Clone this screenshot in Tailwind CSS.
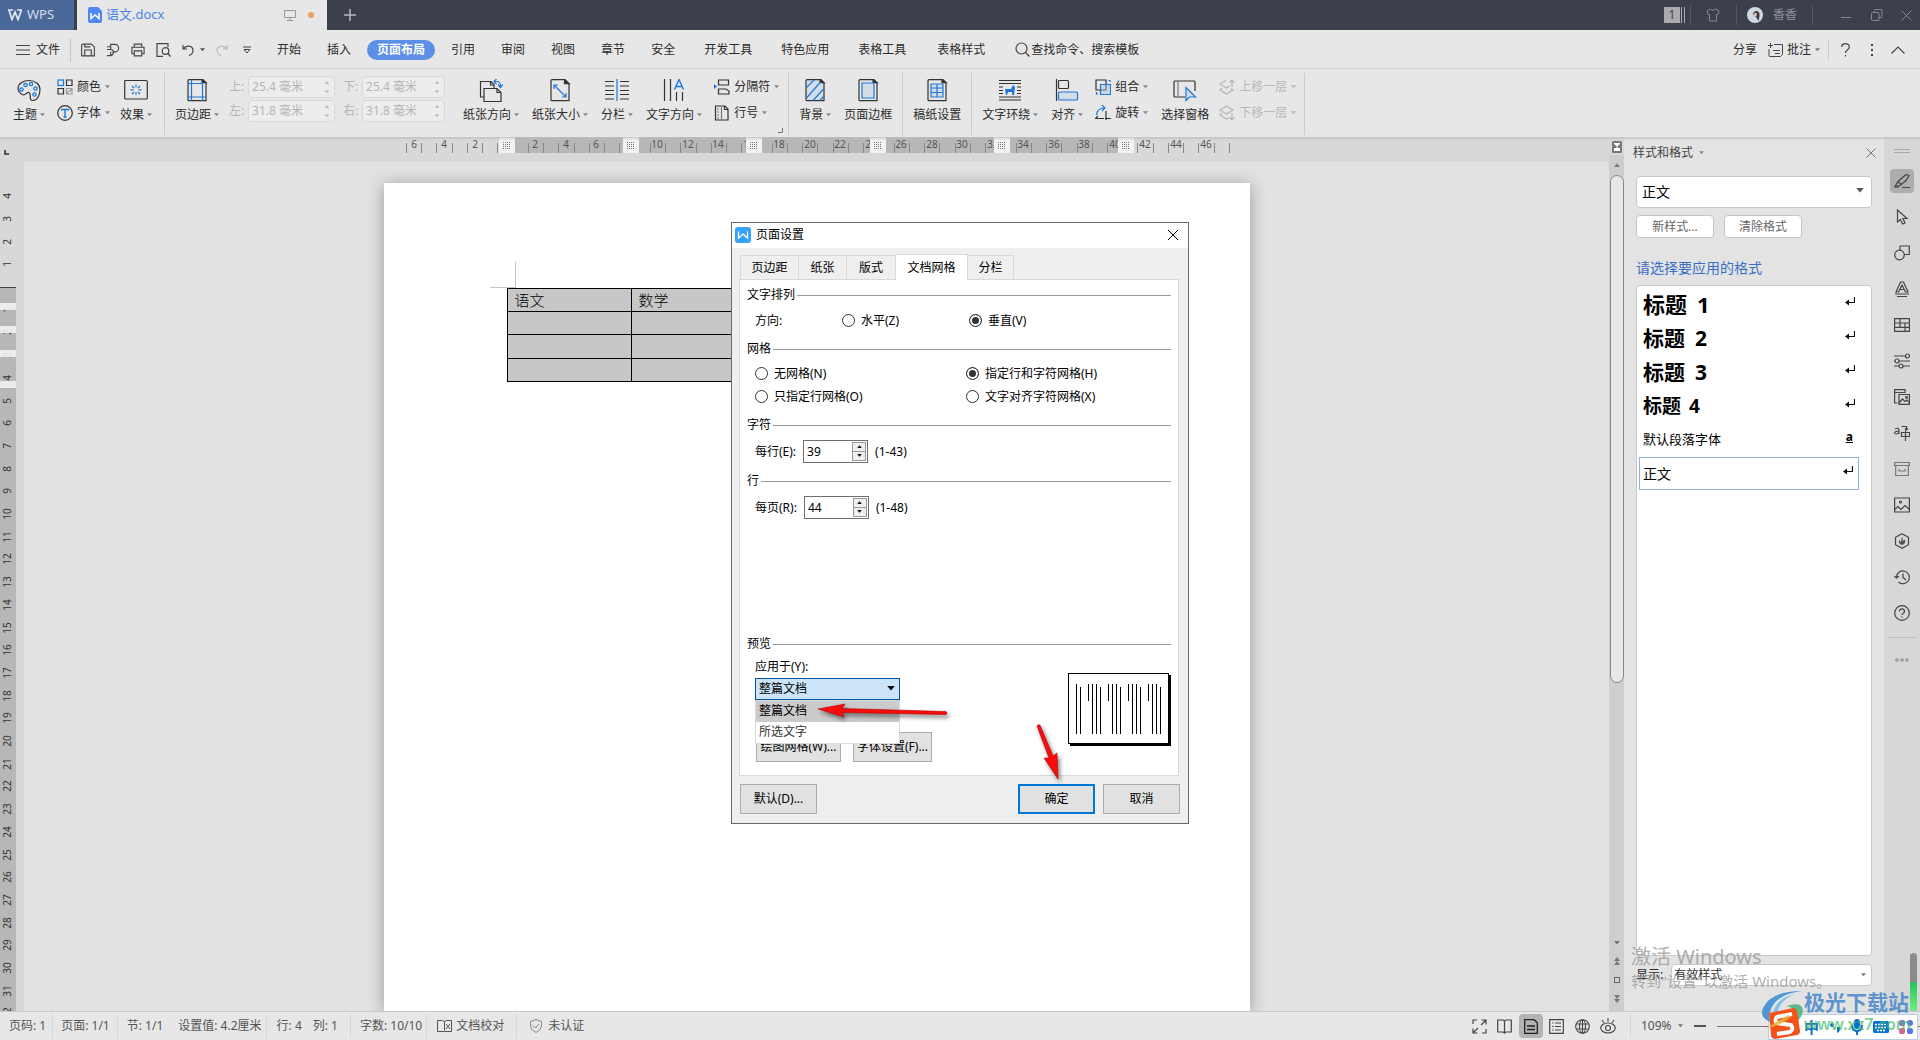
<!DOCTYPE html>
<html lang="zh-CN">
<head>
<meta charset="utf-8">
<title>语文.docx - WPS</title>
<script src="https://cdn.jsdelivr.net/npm/@tailwindcss/browser@4"></script>
</head>
<body class="relative flex h-screen flex-col overflow-hidden bg-[#e7e7e7] font-['Noto_Sans','Noto_Sans_CJK_SC',sans-serif] text-xs text-[#2b2b2b]">

<svg class="hidden">
  <symbol id="caret" viewBox="0 0 6 4"><path d="M0 0h6L3 3.6z" fill="currentColor"/></symbol>
  <symbol id="spin" viewBox="0 0 6 16"><path d="M0 3.500h6L3 0zM0 12.500h6L3 16z" fill="currentColor"/></symbol>
  <symbol id="ret" viewBox="0 0 10 9"><path d="M9.500 0v5.500H1" fill="none" stroke="#111" stroke-width="1.200"/><path d="M0 5.500l4-3v6z" fill="#111"/></symbol>
</svg>

<!-- Title bar -->
<header class="flex h-[30px] shrink-0 items-stretch bg-[#3c404c]">
  <button class="flex w-[74px] items-center gap-1 bg-[#4a6999] pl-[7px] text-[13px] text-[#d5dce8]">
    <svg class="h-3 w-4" viewBox="0 0 16 12" fill="none" stroke="#e4e9f1" stroke-width="1.700"><path d="M1 1h5M10 1h5M2 1l3 9.500L8 3l3 7.500L14.500 1"/></svg>
    WPS
  </button>
  <div class="ml-[3px] flex w-[250px] items-center bg-[#e7e7e7] px-[11px]">
    <svg class="h-4 w-[14px]" viewBox="0 0 14 16"><path d="M2 0h8l4 4v10a2 2 0 0 1-2 2H2a2 2 0 0 1-2-2V2a2 2 0 0 1 2-2z" fill="#4c88ef"/><path d="M3 6v5.500L7 8l4 3.500V6" fill="none" stroke="#fff" stroke-width="1.500"/></svg>
    <span class="ml-1 text-[13px] text-[#4c85e6]">语文.docx</span>
    <svg class="ml-auto h-3 w-3" viewBox="0 0 12 12" fill="none" stroke="#999"><path d="M.5 1.500h11v7H.5zM6 8.500v3M3 11.500h6"/></svg>
    <span class="mr-0.5 ml-3 h-1.5 w-1.5 rounded-full bg-[#e9a25c]"></span>
  </div>
  <button aria-label="新建" class="ml-[17px] flex w-3 items-center"><svg class="h-3 w-3" viewBox="0 0 12 12" stroke="#b5b8bf" stroke-width="1.500"><path d="M6 0v12M0 6h12"/></svg></button>
  <div class="ml-auto flex items-center">
    <span class="flex h-4 w-4 items-center justify-center bg-[#a9abb1] text-xs text-[#553d28]">1</span>
    <span class="ml-px h-4 w-1 border-x border-[#a9abb1]"></span>
    <span class="ml-[5px] h-5 w-px bg-[#555965]"></span>
    <svg class="ml-[15px] h-[14px] w-[14px]" viewBox="0 0 14 14" fill="none" stroke="#858892"><path d="M4.500 1L1 3l1 3.500h1.500V13h7V6.500H12L13 3 9.500 1Q7 4 4.500 1z"/></svg>
    <span class="ml-4 h-5 w-px bg-[#555965]"></span>
    <svg class="ml-2.5 h-4 w-4" viewBox="0 0 16 16"><circle cx="8" cy="8" r="8" fill="#cfdae0"/><path d="M6 7q1-3.500 4-3 3 1 2.500 5l-1 5-2.500-4z" fill="#3a3a46"/><path d="M6 9l2-3.500 2 1-.5 3z" fill="#e3bcae"/></svg>
    <span class="ml-2.5 text-[#8d9099]">香香</span>
    <span class="ml-[15px] h-5 w-px bg-[#555965]"></span>
    <button aria-label="最小化" class="ml-7"><svg class="h-3 w-2.5" viewBox="0 0 10 12" stroke="#858892"><path d="M0 8.500h10"/></svg></button>
    <button aria-label="还原" class="ml-5"><svg class="h-3 w-3" viewBox="0 0 12 12" fill="none" stroke="#858892"><rect x=".5" y="3.500" width="7.500" height="8" rx="1"/><path d="M3.500 3.500v-2a1 1 0 0 1 1-1h5.500a1 1 0 0 1 1 1v6a1 1 0 0 1-1 1H8"/></svg></button>
    <button aria-label="关闭" class="mr-2 ml-[18px]"><svg class="h-[11px] w-[11px]" viewBox="0 0 11 11" stroke="#858892"><path d="M.5.500l10 10M10.500.500l-10 10"/></svg></button>
  </div>
</header>

<!-- Menu bar -->
<nav class="flex h-[39px] shrink-0 items-center border-b border-[#d4d4d4] pt-px whitespace-nowrap">
  <button class="flex items-center gap-1.5 pl-4"><svg class="h-3 w-[14px]" viewBox="0 0 14 12" stroke="#444"><path d="M0 1.500h14M0 6h14M0 10.500h14"/></svg>文件</button>
  <span class="ml-2.5 h-6 w-px bg-[#c4c4c4]"></span>
  <div class="ml-2.5 flex w-[172px] items-center gap-[11px] text-[#555]">
    <svg class="h-[14px] w-[14px]" viewBox="0 0 15 14" fill="none" stroke="#444" stroke-width="1.200"><path d="M.7 13V2A1.300 1.300 0 0 1 2 .7h9l3.300 3v9.600H1zM4 .7v3h6M4 13V7h7v6"/></svg>
    <svg class="h-[14px] w-[14px]" viewBox="0 0 15 14" fill="none" stroke="#444" stroke-width="1.200"><path d="M5 13V9M5 6V1h4.500a4 4 0 0 1 0 8H7M1 3.500h4M1 6.500h4q3 0 3 3t-3 3.500H1"/></svg>
    <svg class="h-[14px] w-[14px]" viewBox="0 0 15 14" fill="none" stroke="#444" stroke-width="1.200"><path d="M3.500 4V.7h8V4M3.500 11H1V4h13v7h-2.500M3.500 8h8v5.300h-8z"/></svg>
    <svg class="h-[14px] w-[15px]" viewBox="0 0 15 14" fill="none" stroke="#444" stroke-width="1.200"><path d="M7 13.300H1V.7h11V4"/><circle cx="9.500" cy="8" r="3.300"/><path d="M12 10.500l2.500 3"/></svg>
    <span class="flex items-center gap-1.5"><svg class="h-3 w-3" viewBox="0 0 12 12" fill="none" stroke="#444" stroke-width="1.200"><path d="M1 1v4h4M1 5C5 0 11 2 11 6.500Q11 10 7 11.500"/></svg><svg class="h-1 w-[5px]"><use href="#caret"/></svg></span>
    <svg class="h-3 w-3" viewBox="0 0 12 12" fill="none" stroke="#bbb" stroke-width="1.200"><path d="M11 1v4H7M11 5C7 0 1 2 1 6.500Q1 10 5 11.500"/></svg>
    <svg class="ml-1 h-2 w-2" viewBox="0 0 8 8" fill="none" stroke="#444"><path d="M0 1h8M1 3.500h6L4 7z"/></svg>
  </div>
  <div class="ml-[11px] flex items-center">
    <button class="px-[13px]">开始</button><button class="px-[13px]">插入</button>
    <button class="mx-[3px] h-5 rounded-full bg-[#5b8fe8] px-2.5 font-bold text-white">页面布局</button>
    <button class="px-[13px]">引用</button><button class="px-[13px]">审阅</button><button class="px-[13px]">视图</button><button class="px-[13px]">章节</button><button class="px-[13px]">安全</button>
    <button class="pr-[13px] pl-4">开发工具</button><button class="pr-[13px] pl-4">特色应用</button><button class="pr-[13px] pl-4">表格工具</button><button class="pr-[13px] pl-[18px]">表格样式</button>
  </div>
  <button class="ml-[17px] flex items-center gap-px"><svg class="h-[15px] w-[15px]" viewBox="0 0 15 15" fill="none" stroke="#444" stroke-width="1.200"><circle cx="6.500" cy="6.500" r="5.500"/><path d="M10.500 10.500l4 4"/></svg>查找命令、搜索模板</button>
  <div class="ml-auto flex items-center pr-[15px]">
    <button>分享</button>
    <button class="ml-[11px] flex items-center gap-1"><svg class="h-[14px] w-[15px]" viewBox="0 0 15 14" fill="none" stroke="#444"><path d="M6 1.500h8.500v10l-2 2H2a1 1 0 0 1-1-1V6M0 2.500h5M2.500 0v5M5 7.500h7M7 10.500h5"/></svg>批注<svg class="h-1 w-[5px] text-[#777]"><use href="#caret"/></svg></button>
    <span class="ml-2 h-5 w-px bg-[#ccc]"></span>
    <button aria-label="帮助" class="ml-3"><svg class="h-[14px] w-[9px]" viewBox="0 0 9 14" fill="none" stroke="#444" stroke-width="1.200"><path d="M.7 4C.7-.5 8.300-.5 8.300 4c0 2.500-3.800 3-3.800 6M4.500 12v1.500"/></svg></button>
    <button aria-label="更多" class="ml-[21px]"><svg class="h-3 w-0.5" viewBox="0 0 2 12" fill="#444"><path d="M0 0h2v2H0zM0 5h2v2H0zM0 10h2v2H0z"/></svg></button>
    <button aria-label="收起功能区" class="ml-[18px]"><svg class="h-2 w-[14px]" viewBox="0 0 14 8" fill="none" stroke="#444" stroke-width="1.200"><path d="M.5 7.500L7 1l6.500 6.500"/></svg></button>
  </div>
</nav>

<!-- Ribbon -->
<section class="relative z-10 flex h-[68px] shrink-0 items-start pl-[13px] leading-4 whitespace-nowrap shadow-[0_1px_3px_#bbb]">
  <button class="flex flex-col items-center gap-1 pt-2.5">
    <svg class="h-6 w-6" viewBox="0 0 24 24" fill="none" stroke="#333" stroke-width="1.200"><path d="M12 1.500c6 0 11 3.500 11 9 0 6-3 11-7 11-5 0-1-6-4-8-2.500-1.500-3 4-7 2-3-2-4-4-4-6 0-4.500 5-8 11-8z"/><g stroke="#1f78d8" fill="#cfe0f2"><circle cx="4.500" cy="10.500" r="1.700"/><circle cx="8.500" cy="6" r="1.700"/><circle cx="14" cy="5" r="1.700"/><circle cx="18.500" cy="9.500" r="1.700"/><circle cx="17.500" cy="15.500" r="1.700"/></g></svg>
    <span class="flex items-center gap-[3px]">主题<svg class="h-1 w-[5px] text-[#888]"><use href="#caret"/></svg></span>
  </button>
  <div class="ml-3 flex flex-col gap-2.5 pt-2.5">
    <button class="flex items-center gap-1"><svg class="h-4 w-4" viewBox="0 0 16 16" fill="none" stroke="#333" stroke-width="1.200"><rect x="1" y="1" width="5.500" height="5.500" stroke="#1f78d8"/><path d="M9.500 1H15v5.500H9.500zM1 9.500h5.500V15H1z"/><path d="M9.500 9.500H15V15H9.500zM10 14l5-4" stroke="#999"/></svg>颜色<svg class="h-1 w-[5px] text-[#888]"><use href="#caret"/></svg></button>
    <button class="flex items-center gap-1"><svg class="h-4 w-4" viewBox="0 0 16 16" fill="none" stroke="#333" stroke-width="1.200"><circle cx="8" cy="8" r="7.300"/><path d="M4.500 5.500v-1h7v1M8 4.500v7.500M6.500 12h3" stroke="#1f78d8" stroke-width="1.400"/></svg>字体<svg class="h-1 w-[5px] text-[#888]"><use href="#caret"/></svg></button>
  </div>
  <button class="ml-2.5 flex flex-col items-center gap-1 pt-2.5">
    <svg class="h-6 w-6" viewBox="0 0 24 24" fill="none" stroke="#333" stroke-width="1.200"><rect x=".7" y="1.500" width="22.600" height="18.500" rx="1"/><path d="M12 5.500v3M12 13v3M6.500 10.800h3M14.500 10.800h3M8 7l2 2M14 13l2 2M16 7l-2 2M10 13l-2 2" stroke="#1f78d8"/></svg>
    <span class="flex items-center gap-[3px]">效果<svg class="h-1 w-[5px] text-[#888]"><use href="#caret"/></svg></span>
  </button>
  <span class="mt-1 ml-3 h-[62px] w-px bg-[#ccc]"></span>
  <button class="ml-2.5 flex flex-col items-center gap-1 pt-2.5">
    <svg class="h-6 w-6" viewBox="0 0 24 24" fill="none" stroke="#333" stroke-width="1.200"><path d="M4 .7h14l3 3v18H4a1 1 0 0 1-1-1v-19a1 1 0 0 1 1-1z"/><path d="M17 .7v3h4z" fill="#333"/><path d="M6.500 1v21M17.500 3.500V22M3 4.500h15M3 18h18" stroke="#1f78d8"/></svg>
    <span class="flex items-center gap-[3px]">页边距<svg class="h-1 w-[5px] text-[#888]"><use href="#caret"/></svg></span>
  </button>
  <div class="ml-2.5 grid grid-cols-[15px_87px_15px_87px] items-center gap-x-1 gap-y-0.5 pt-[7px] text-[#b5b5b5]">
    <label for="mt">上:</label><span class="flex h-[22px] items-center rounded-sm border border-[#d8d8d8] bg-[#ededed] pr-1 pl-[3px]"><input id="mt" disabled value="25.4 毫米" class="w-0 flex-1"><svg class="h-3 w-1.5"><use href="#spin"/></svg></span>
    <label for="mb" class="pl-1">下:</label><span class="ml-1 flex h-[22px] items-center rounded-sm border border-[#d8d8d8] bg-[#ededed] pr-1 pl-[3px]"><input id="mb" disabled value="25.4 毫米" class="w-0 flex-1"><svg class="h-3 w-1.5"><use href="#spin"/></svg></span>
    <label for="ml">左:</label><span class="flex h-[22px] items-center rounded-sm border border-[#d8d8d8] bg-[#ededed] pr-1 pl-[3px]"><input id="ml" disabled value="31.8 毫米" class="w-0 flex-1"><svg class="h-3 w-1.5"><use href="#spin"/></svg></span>
    <label for="mr" class="pl-1">右:</label><span class="ml-1 flex h-[22px] items-center rounded-sm border border-[#d8d8d8] bg-[#ededed] pr-1 pl-[3px]"><input id="mr" disabled value="31.8 毫米" class="w-0 flex-1"><svg class="h-3 w-1.5"><use href="#spin"/></svg></span>
  </div>
  <button class="ml-[18px] flex flex-col items-center gap-1 pt-2.5">
    <svg class="h-6 w-6" viewBox="0 0 24 24" fill="none" stroke="#333" stroke-width="1.200"><path d="M5 18H1.500V2.500H12l3 3V9M5 22.500V9.500h13l4 4v9z"/><path d="M11.500 2.500V6H15M18 9.500v4h4" /><path d="M15 2.500h3q3.500 0 3.500 5M17.500 0L15 2.500 17.500 5M19 5.500l2.500 3 2.500-3" stroke="#1f78d8"/></svg>
    <span class="flex items-center gap-[3px]">纸张方向<svg class="h-1 w-[5px] text-[#888]"><use href="#caret"/></svg></span>
  </button>
  <button class="ml-[13px] flex flex-col items-center gap-1 pt-2.5">
    <svg class="h-6 w-6" viewBox="0 0 24 24" fill="none" stroke="#333" stroke-width="1.200"><path d="M4 .7h13l4 4v17H4a1 1 0 0 1-1-1v-19a1 1 0 0 1 1-1z"/><path d="M16.500.7v4H21z" fill="#333"/><path d="M6 6l12 12M6 10V6h4M14 18h4v-4" stroke="#1f78d8"/></svg>
    <span class="flex items-center gap-[3px]">纸张大小<svg class="h-1 w-[5px] text-[#888]"><use href="#caret"/></svg></span>
  </button>
  <button class="ml-[13px] flex flex-col items-center gap-1 pt-2.5">
    <svg class="h-6 w-6" viewBox="0 0 24 24" fill="none" stroke="#333" stroke-width="1.200"><path d="M0 2.500h9M0 7h9M0 11.500h9M0 15.500h9M0 20h9M15 2.500h9M15 7h9M15 11.500h9M15 15.500h9M15 20h9"/><path d="M12 0v22" stroke="#1f78d8"/></svg>
    <span class="flex items-center gap-[3px]">分栏<svg class="h-1 w-[5px] text-[#888]"><use href="#caret"/></svg></span>
  </button>
  <button class="ml-[13px] flex flex-col items-center gap-1 pt-2.5">
    <svg class="h-6 w-6" viewBox="0 0 24 24" fill="none" stroke="#333" stroke-width="1.200"><path d="M2.500 0v22M8.500 0v22M14.500 13v9M20.500 13v9"/><path d="M12.500 10.500L17 .5l4.500 10M14 7.500h6" stroke="#1f78d8" stroke-width="1.400"/></svg>
    <span class="flex items-center gap-[3px]">文字方向<svg class="h-1 w-[5px] text-[#888]"><use href="#caret"/></svg></span>
  </button>
  <div class="relative ml-3 flex flex-col gap-2.5 pt-2.5 pr-[9px]">
    <button class="flex items-center gap-1"><svg class="h-4 w-4" viewBox="0 0 16 16" fill="none" stroke="#333" stroke-width="1.200"><path d="M4.500 1h10v5h-10zM4.500 15V10H12l3 2v3z"/><path d="M0 5l3 2.500L0 10z" fill="#1f78d8" stroke="none"/></svg>分隔符<svg class="h-1 w-[5px] text-[#888]"><use href="#caret"/></svg></button>
    <button class="flex items-center gap-1"><svg class="h-4 w-4" viewBox="0 0 16 16" fill="none" stroke="#333" stroke-width="1.200"><path d="M1.500 1H11l3 3v11H1.500zM10.500 1v3.500H14"/><path d="M7.500 2v12M3 4h2M3 7h2M3 10h2M3 13h2" stroke="#777"/></svg>行号<svg class="h-1 w-[5px] text-[#888]"><use href="#caret"/></svg></button>
    <svg class="absolute -bottom-3 right-[5px] h-[5px] w-[5px]" viewBox="0 0 5 5" fill="none" stroke="#777"><path d="M4.500 0v4.500H0"/></svg>
  </div>
  <span class="mt-1 h-[62px] w-px bg-[#ccc]"></span>
  <button class="ml-2.5 flex flex-col items-center gap-1 pt-2.5">
    <svg class="h-6 w-6" viewBox="0 0 24 24" fill="#d3dde8" stroke="#333" stroke-width="1.200"><path d="M4 .7h14l3 3v18H4a1 1 0 0 1-1-1v-19a1 1 0 0 1 1-1z"/><path d="M17 .7v3h4z" fill="#333"/><path d="M3.500 8.500L11 1M3.500 19L17.500 3M10 21.500L20.500 10M17 21.500l3.500-4" stroke="#1f78d8"/></svg>
    <span class="flex items-center gap-[3px]">背景<svg class="h-1 w-[5px] text-[#888]"><use href="#caret"/></svg></span>
  </button>
  <button class="ml-[13px] flex flex-col items-center gap-1 pt-2.5">
    <svg class="h-6 w-6" viewBox="0 0 24 24" fill="none" stroke="#333" stroke-width="1.200"><path d="M4 .7h14l3 3v18H4a1 1 0 0 1-1-1v-19a1 1 0 0 1 1-1z"/><path d="M17 .7v3h4z" fill="#333"/><path d="M6 4h12v15H6z" stroke="#1f78d8" fill="#d3dde8"/></svg>
    页面边框
  </button>
  <span class="mt-1 ml-2.5 h-[62px] w-px bg-[#ccc]"></span>
  <button class="ml-2.5 flex flex-col items-center gap-1 pt-2.5">
    <svg class="h-6 w-6" viewBox="0 0 24 24" fill="none" stroke="#333" stroke-width="1.200"><path d="M4 .7h14l3 3v18H4a1 1 0 0 1-1-1v-19a1 1 0 0 1 1-1z"/><path d="M17 .7v3h4z" fill="#333"/><path d="M6 5h12v13H6zM6 9h12M6 13.500h12M12 5v4M12 13.500V18M12 9v4.500" stroke="#1f78d8" fill="#d3dde8"/></svg>
    稿纸设置
  </button>
  <span class="mt-1 ml-2.5 h-[62px] w-px bg-[#ccc]"></span>
  <button class="ml-2.5 flex flex-col items-center gap-1 pt-2.5">
    <svg class="h-6 w-6" viewBox="0 0 24 24" fill="none" stroke="#333" stroke-width="1.200"><path d="M1 1.500h22M1 4.500h22M1 8h4M1 11.500h4M1 14.500h4M19 8h4M19 11.500h4M19 14.500h4M1 18h22M1 21h22"/><path d="M7 10h6l2-4 2 2-1 8h-2v-3h-4l-1 3H8z" fill="#1f78d8" stroke="none"/></svg>
    <span class="flex items-center gap-[3px]">文字环绕<svg class="h-1 w-[5px] text-[#888]"><use href="#caret"/></svg></span>
  </button>
  <button class="ml-[13px] flex flex-col items-center gap-1 pt-2.5">
    <svg class="h-6 w-6" viewBox="0 0 24 24" fill="none" stroke="#333" stroke-width="1.200"><path d="M1.500 0v22"/><rect x="3.500" y="1.500" width="10" height="8" rx="1"/><rect x="3.500" y="13" width="19" height="8" rx="1" stroke="#1f78d8" fill="#d3dde8"/></svg>
    <span class="flex items-center gap-[3px]">对齐<svg class="h-1 w-[5px] text-[#888]"><use href="#caret"/></svg></span>
  </button>
  <div class="ml-3 flex flex-col gap-2.5 pt-2.5">
    <button class="flex items-center gap-1"><svg class="h-4 w-4" viewBox="0 0 16 16" fill="none" stroke="#333" stroke-width="1.200"><path d="M1 1h10v10H1z"/><path d="M5.500 5.500h10v10h-10z" stroke="#1f78d8" fill="#9dc3ee66"/><path d="M13.500 1.500h1.500v1.500M1.500 13v2H3" stroke="#1f78d8"/></svg>组合<svg class="h-1 w-[5px] text-[#888]"><use href="#caret"/></svg></button>
    <button class="flex items-center gap-1"><svg class="h-4 w-4" viewBox="0 0 16 16" fill="none" stroke="#333" stroke-width="1.200"><path d="M0 13.500h9M3 11l-2.500 2.500M11 6v10M10 13.500h6" stroke-dasharray="9 1"/><path d="M1.500 10Q2 3 9.500 3M7 0l3 3-3 3" stroke="#1f78d8"/></svg>旋转<svg class="h-1 w-[5px] text-[#888]"><use href="#caret"/></svg></button>
  </div>
  <button class="ml-[13px] flex flex-col items-center gap-1 pt-2.5">
    <svg class="h-6 w-6" viewBox="0 0 24 24" fill="none" stroke="#333" stroke-width="1.200"><path d="M12 18H2a1 1 0 0 1-1-1V3a1 1 0 0 1 1-1h19a1 1 0 0 1 1 1v9"/><path d="M5 2v16" stroke="#777"/><path d="M13 8.500v13l3.500-3.500h6z" stroke="#1f78d8" fill="#d3dde8"/></svg>
    选择窗格
  </button>
  <div class="ml-2.5 flex flex-col gap-2.5 pt-2.5 text-[#b9b9b9]">
    <button disabled class="flex items-center gap-1"><svg class="h-4 w-4" viewBox="0 0 16 16" fill="none" stroke="#b5b5b5" stroke-width="1.200"><path d="M7 1.500L1 5l6.500 4 3-2M3 9l-2 2 6.500 4 6.500-4-2-1.500M13 8V1M10.500 3.500L13 1l2.500 2.500"/></svg>上移一层<svg class="h-1 w-[5px]"><use href="#caret"/></svg></button>
    <button disabled class="flex items-center gap-1"><svg class="h-4 w-4" viewBox="0 0 16 16" fill="none" stroke="#b5b5b5" stroke-width="1.200"><path d="M7.500 1L1 5l6.500 4L14 5zM3 8l-2 2 6.500 4 2-1M13 8v7M10.500 12.500L13 15l2.500-2.500"/></svg>下移一层<svg class="h-1 w-[5px]"><use href="#caret"/></svg></button>
  </div>
  <span class="mt-1 ml-2 h-[62px] w-px bg-[#ccc]"></span>
</section>

<!-- Workspace -->
<main class="flex min-h-0 flex-1">
  <div class="flex min-w-0 flex-1 flex-col">
    <div class="flex h-[25px] shrink-0 bg-[#d8d8d8]">
      <svg class="h-[25px] w-6" viewBox="0 0 24 25" fill="none" stroke="#555" stroke-width="2"><path d="M5 13v4h4"/></svg>
      <div class="flex flex-1 justify-center"><svg id="hruler" class="h-4 w-[866px] overflow-visible" viewBox="0 0 866 16"></svg></div>
    </div>
    <div class="flex min-h-0 flex-1">
      <div class="w-6 shrink-0 overflow-hidden bg-[#d8d8d8]"><svg id="vruler" class="h-full w-4"></svg></div>
      <div class="flex flex-1 justify-center overflow-hidden bg-[#e2e2e2] pt-[21px]">
        <article class="w-[866px] bg-white pt-[79px] shadow-[0_2px_16px_rgba(0,0,0,0.32)]">
          <div class="ml-[106px] h-[26px] w-[26px] border-r border-b border-[#c6c6c6]"></div>
          <table class="ml-[123px] w-[621px] table-fixed border-collapse bg-[#c7c7c7] font-['Noto_Sans_CJK_SC',sans-serif] text-[15px] leading-5 font-light text-black">
            <tbody>
              <tr class="h-[23px]"><td class="border border-black px-[7px]">语文</td><td class="border border-black px-[7px]">数学</td><td class="border border-black"></td><td class="border border-black"></td><td class="border border-black"></td></tr>
              <tr class="h-[23px]"><td class="border border-black"></td><td class="border border-black"></td><td class="border border-black"></td><td class="border border-black"></td><td class="border border-black"></td></tr>
              <tr class="h-6"><td class="border border-black"></td><td class="border border-black"></td><td class="border border-black"></td><td class="border border-black"></td><td class="border border-black"></td></tr>
              <tr class="h-[23px]"><td class="border border-black"></td><td class="border border-black"></td><td class="border border-black"></td><td class="border border-black"></td><td class="border border-black"></td></tr>
            </tbody>
          </table>
        </article>
      </div>
    </div>
  </div>

  <!-- Scroll bar -->
  <div class="flex w-[15px] shrink-0 flex-col items-center bg-[#cecece] text-[#777]">
    <div class="flex h-[18px] w-full justify-center bg-[#d8d8d8] pt-1"><svg class="h-3 w-2.5" viewBox="0 0 10 12"><rect width="10" height="12" rx="1.500" fill="#777"/><path d="M2 2h6v1L5.500 5v2H8v3H2V7h2.500V5L2 3z" fill="#fff"/></svg></div>
    <svg class="mt-2 h-1 w-1.5 rotate-180"><use href="#caret"/></svg>
    <div class="mt-2 h-[508px] w-[14px] rounded-full border border-[#888] bg-[#e8e8e8]"></div>
    <svg class="mt-auto h-1 w-1.5"><use href="#caret"/></svg>
    <svg class="mt-3 h-2 w-1.5" viewBox="0 0 6 8" fill="#777"><path d="M0 4h6L3 0zM0 8h6L3 4z"/></svg>
    <span class="mt-3 h-1.5 w-1.5 border border-[#666]"></span>
    <svg class="mt-3 mb-2 h-2 w-1.5" viewBox="0 0 6 8" fill="#777"><path d="M0 0h6L3 4zM0 4h6L3 8z"/></svg>
  </div>

  <!-- Styles pane -->
  <aside class="flex w-[260px] shrink-0 flex-col bg-[#e3e3e3] px-3">
    <div class="-ml-[3px] -mr-1 flex h-[30px] items-center gap-1.5 pt-px text-[#444]">样式和格式<svg class="h-1 w-[5px] text-[#888]"><use href="#caret"/></svg>
      <button aria-label="关闭窗格" class="ml-auto"><svg class="h-2.5 w-2.5" viewBox="0 0 10 10" stroke="#777"><path d="M.5.500l9 9M9.500.500l-9 9"/></svg></button></div>
    <div class="relative mt-[9px] h-8">
      <select aria-label="当前样式" class="h-8 w-full appearance-none rounded-sm border border-[#c9c9c9] bg-white px-[5px] text-sm text-black"><option>正文</option></select>
      <svg class="absolute top-3 right-2 h-[5px] w-2 text-[#555]"><use href="#caret"/></svg>
    </div>
    <div class="mt-[7px] flex gap-2.5 text-[#666]">
      <button class="h-[23px] w-[78px] rounded-sm border border-[#c4c4c4] bg-white">新样式...</button>
      <button class="h-[23px] w-[78px] rounded-sm border border-[#c4c4c4] bg-white">清除格式</button>
    </div>
    <p class="mt-5 text-sm leading-5 text-[#3b6fc5]">请选择要应用的格式</p>
    <ul class="mt-[7px] flex-1 rounded-sm border border-[#c9c9c9] bg-white px-0.5 pt-px text-black">
      <li class="flex h-[34px] items-center gap-2.5 px-1 text-[22px] leading-8 font-bold">标题 <span>1</span><svg class="mb-1.5 mr-2.5 ml-auto h-[9px] w-2.5"><use href="#ret"/></svg></li>
      <li class="flex h-[34px] items-center gap-2.5 px-1 text-[21px] leading-8 font-bold">标题 <span>2</span><svg class="mb-1.5 mr-2.5 ml-auto h-[9px] w-2.5"><use href="#ret"/></svg></li>
      <li class="flex h-[34px] items-center gap-2.5 px-1 text-[21px] leading-8 font-bold">标题 <span>3</span><svg class="mb-1.5 mr-2.5 ml-auto h-[9px] w-2.5"><use href="#ret"/></svg></li>
      <li class="flex h-[34px] items-center gap-2 px-1 text-[19px] leading-8 font-bold">标题 <span>4</span><svg class="mb-1.5 mr-2.5 ml-auto h-[9px] w-2.5"><use href="#ret"/></svg></li>
      <li class="flex h-[34px] items-center px-1 text-[13px]">默认段落字体<span class="mr-3 mb-1.5 ml-auto text-xs font-bold underline">a</span></li>
      <li class="mr-2.5 flex h-[33px] items-center border border-[#8fb0df] px-[3px] text-sm">正文<svg class="mb-1.5 mr-0.5 ml-auto h-[9px] w-2.5"><use href="#ret"/></svg></li>
    </ul>
    <div class="mt-2 mb-[25px] flex items-center gap-2">
      <label for="show">显示:</label>
      <div class="relative flex-1">
        <select id="show" class="block h-[22px] w-full appearance-none rounded-sm border border-[#c9c9c9] bg-white px-0.5"><option>有效样式</option></select>
        <svg class="absolute top-[9px] right-1.5 h-1 w-[5px] text-[#777]"><use href="#caret"/></svg>
      </div>
    </div>
  </aside>

  <!-- Side tool strip -->
  <div class="flex w-9 shrink-0 flex-col items-center gap-3 bg-[#d7d7d7] pt-3">
    <svg class="h-1 w-4" viewBox="0 0 16 4" stroke="#aaa"><path d="M0 .5h16M0 3.500h16"/></svg>
    <button aria-label="样式" class="mt-1 flex h-6 w-6 items-center justify-center rounded bg-[#adadad]"><svg class="h-4 w-4" viewBox="0 0 16 16" fill="none" stroke="#444" stroke-width="1.200"><path d="M1 13.500l3-5 8-7 3 1-3 5-6 5zM4 8.500l3 3M8 14.500h8M0 14h5"/></svg></button>
    <button aria-label="选择" class="flex h-6 w-6 items-center justify-center"><svg class="h-4 w-4" viewBox="0 0 16 16" fill="none" stroke="#444" stroke-width="1.200"><path d="M3.500 1v12l3-2.500 2 4.500 2.500-1-2-4.500h4z"/></svg></button>
    <button aria-label="形状" class="flex h-6 w-6 items-center justify-center"><svg class="h-4 w-4" viewBox="0 0 16 16" fill="none" stroke="#444" stroke-width="1.200"><circle cx="5.500" cy="10" r="4.800"/><path d="M6 5V2a1 1 0 0 1 1-1h8.300v8.500H10.500"/></svg></button>
    <button aria-label="艺术字" class="flex h-6 w-6 items-center justify-center"><svg class="h-4 w-4" viewBox="0 0 16 16" fill="none" stroke="#444" stroke-width="1.200"><path d="M2 11L6.500 1h3L14 11h-2.500L8 4 4.500 11zM6 8.500h4M1 13h14M3 15.500h10"/></svg></button>
    <button aria-label="表格" class="flex h-6 w-6 items-center justify-center"><svg class="h-4 w-4" viewBox="0 0 16 16" fill="none" stroke="#444" stroke-width="1.200"><path d="M.6 1.600h14.800v12.800H.6zM.6 6h14.800M.6 10.300h14.800M6 1.600v8.700M11 6v8.400"/></svg></button>
    <button aria-label="设置" class="flex h-6 w-6 items-center justify-center"><svg class="h-4 w-4" viewBox="0 0 16 16" fill="none" stroke="#444" stroke-width="1.200"><path d="M0 3h11M5 8h11M0 13h5M9 13h7M0 8h1"/><circle cx="13.500" cy="3" r="2"/><circle cx="3" cy="8" r="2"/><circle cx="7" cy="13" r="2"/></svg></button>
    <button aria-label="图库" class="flex h-6 w-6 items-center justify-center"><svg class="h-4 w-4" viewBox="0 0 16 16" fill="none" stroke="#444" stroke-width="1.200"><path d="M3.500 14H.6V.6H11V4M.6 3.500H11M5 5.500h10.400v9.900H5zM5 14l3.500-4 2.500 2.500 2-1.500 2.400 3"/><circle cx="12.500" cy="8.500" r=".8"/></svg></button>
    <button aria-label="翻译" class="flex h-6 w-6 items-center justify-center"><svg class="h-4 w-4" viewBox="0 0 16 16" fill="none" stroke="#444" stroke-width="1.200"><path d="M1 4q4-2 4 1.500V9M5 6Q.6 6 .6 8 1 10 5 8M7.500 1.500h5V5M11 3.500L12.500 5 14 3.500M7.500 7.500h8v4h-8zM11.500 5.500V16"/></svg></button>
    <button aria-label="归档" class="flex h-6 w-6 items-center justify-center"><svg class="h-4 w-4" viewBox="0 0 16 16" fill="none" stroke="#777" stroke-width="1.200"><path d="M.6 1.500h14.800v3H.6zM1.700 4.500h12.600v10H1.700zM5 8v2h6V8"/></svg></button>
    <button aria-label="图片" class="flex h-6 w-6 items-center justify-center"><svg class="h-4 w-4" viewBox="0 0 16 16" fill="none" stroke="#444" stroke-width="1.200"><path d="M.6 1h14.800v14H.6zM.6 12.500L4 9.500l3 3L11 8.500l4.400 4"/><circle cx="6.500" cy="5" r="1"/></svg></button>
    <button aria-label="稻壳" class="flex h-6 w-6 items-center justify-center"><svg class="h-4 w-4" viewBox="0 0 16 16" fill="none" stroke="#444" stroke-width="1.200"><path d="M8 .7l6.500 3.600v7.400L8 15.300l-6.500-3.600V4.300z"/><path d="M8 12Q4 11 5 7l2 2q-.5-3 1.500-5 .5 2 0 4l2.500-1.500Q12 11 8 12z" fill="#555" stroke="none"/></svg></button>
    <button aria-label="历史" class="flex h-6 w-6 items-center justify-center"><svg class="h-4 w-4" viewBox="0 0 16 16" fill="none" stroke="#444" stroke-width="1.200"><path d="M2.500 8a6.400 6.400 0 1 1 2 5M0 7l2.500 2L5 7M9 4.500v4l3 2.500"/></svg></button>
    <button aria-label="帮助" class="flex h-6 w-6 items-center justify-center"><svg class="h-4 w-4" viewBox="0 0 16 16" fill="none" stroke="#444" stroke-width="1.200"><circle cx="8" cy="8" r="7.300"/><path d="M5.500 6.500c0-3.500 5-3.500 5 0 0 1.500-2.500 1.500-2.500 3.500M8 11.500v1.300"/></svg></button>
    <span class="h-px w-[30px] bg-[#bfbfbf]"></span>
    <svg class="mt-2 h-1 w-[14px]" viewBox="0 0 14 4" fill="none" stroke="#888"><circle cx="2" cy="2" r="1.300"/><circle cx="7" cy="2" r="1.300"/><circle cx="12" cy="2" r="1.300"/></svg>
  </div>
</main>

<!-- Status bar -->
<footer class="flex h-[29px] shrink-0 items-center border-t border-[#c9c9c9] pl-[9px] whitespace-nowrap text-[#555]">
  <span>页码: 1</span><i class="mx-1.5 h-6 w-px bg-[#d6d6d6]"></i>
  <span class="ml-0.5">页面: 1/1</span><i class="mx-[7px] h-6 w-px bg-[#d6d6d6]"></i>
  <span class="ml-0.5">节: 1/1</span><span class="ml-[15px]">设置值: 4.2厘米</span><i class="ml-1 h-6 w-px bg-[#d6d6d6]"></i>
  <span class="ml-2.5">行: 4</span><span class="ml-[11px]">列: 1</span><i class="ml-3 h-6 w-px bg-[#d6d6d6]"></i>
  <span class="ml-[9px]">字数: 10/10</span><i class="ml-1 h-6 w-px bg-[#d6d6d6]"></i>
  <button class="ml-2.5 flex items-center gap-1"><svg class="h-3 w-[15px]" viewBox="0 0 15 12" fill="none" stroke="#555"><path d="M7.500 1.500v9M7.500 11.500H.5V.5h5l2 1 2-1h5v11h-7M9 4l4 5M13 4L9 9"/></svg>文档校对</button>
  <i class="ml-3 h-6 w-px bg-[#d6d6d6]"></i>
  <button class="ml-[13px] flex items-center gap-1.5"><svg class="h-[14px] w-3" viewBox="0 0 12 14" fill="none" stroke="#888"><path d="M6 .6l5.500 1.900V7q0 4-5.500 6.500Q.5 11 .5 7V2.500zM3 6.500l2.500 2.500L9 5"/></svg>未认证</button>
  <div class="ml-auto flex w-[448px] items-center">
    <svg class="h-[15px] w-[15px]" viewBox="0 0 15 15" fill="none" stroke="#444" stroke-width="1.200"><path d="M9.500 1H14v4.500M14 1L9 6M5.500 14H1V9.500M1 14l5-5M1 5V1h4M14 10v4h-4"/></svg>
    <svg class="ml-2.5 h-[15px] w-[15px]" viewBox="0 0 15 15" fill="none" stroke="#444" stroke-width="1.200"><path d="M7.500 14V2L6 1H.7v12H6zl1.500-1h5.300V1H9L7.500 2"/></svg>
    <span class="ml-[7px] flex h-6 w-6 items-center justify-center rounded bg-[#b3b3b3]"><svg class="h-[15px] w-[14px]" viewBox="0 0 14 15" fill="none" stroke="#222" stroke-width="1.300"><path d="M.7.700H10l3.300 3v10.600H.7zM3 7h8M3 10.500h8"/></svg></span>
    <svg class="ml-1.5 h-[15px] w-[15px]" viewBox="0 0 15 15" fill="none" stroke="#444" stroke-width="1.200"><path d="M.7.700h13.600v13.600H.7zM3 4h1.500M6 4h6M3 7.500h1.500M6 7.500h6M3 11h1.500M6 11h6"/></svg>
    <svg class="ml-[11px] h-[15px] w-[15px]" viewBox="0 0 15 15" fill="none" stroke="#444" stroke-width="1.100"><circle cx="7.500" cy="7.500" r="6.800"/><ellipse cx="7.500" cy="7.500" rx="3" ry="6.800"/><path d="M7.500.7v13.600M1.300 5h12.400M1.300 10h12.400"/></svg>
    <svg class="ml-2.5 h-4 w-4" viewBox="0 0 16 16" fill="none" stroke="#444" stroke-width="1.100"><ellipse cx="8" cy="10" rx="7.300" ry="5"/><circle cx="8" cy="10" r="2.500"/><path d="M8 0v3.500M2 2l2 3M14 2l-2 3"/></svg>
    <i class="ml-3.5 h-6 w-px bg-[#d6d6d6]"></i>
    <span class="ml-2.5 flex items-center gap-1.5">109%<svg class="h-1 w-[5px] text-[#777]"><use href="#caret"/></svg></span>
    <span class="ml-[11px] h-0.5 w-3 bg-[#555]"></span>
    <span class="ml-[11px] h-px flex-1 bg-[#777]"></span>
  </div>
</footer>

<!-- Page setup dialog -->
<form class="absolute top-[222px] left-1/2 z-20 flex h-[602px] w-[458px] -translate-x-1/2 flex-col border border-[#6b6b6b] bg-[#efefef] text-black" onsubmit="return false">
  <div class="flex h-[25px] shrink-0 items-center gap-[5px] bg-white pr-2.5 pb-px pl-[3px]">
    <svg class="h-4 w-4" viewBox="0 0 16 16"><rect width="16" height="16" rx="3" fill="#36a3fb"/><path d="M3.500 4.500V11L8 7l4.500 4V4.500" fill="none" stroke="#fff" stroke-width="1.300"/></svg>
    页面设置
    <button aria-label="关闭" class="ml-auto"><svg class="h-2.5 w-2.5" viewBox="0 0 10 10" stroke="#000"><path d="M0 0l10 10M10 0L0 10"/></svg></button>
  </div>
  <div class="mt-1.5 ml-2 flex h-[25px] shrink-0 items-end">
    <button class="h-6 w-[59px] border border-b-0 border-[#d9d9d9]">页边距</button>
    <button class="h-6 w-12 border-t border-r border-[#d9d9d9]">纸张</button>
    <button class="h-6 w-12 border-t border-[#d9d9d9]">版式</button>
    <button class="relative z-10 -mb-px h-[26px] w-[73px] border border-b-0 border-[#d9d9d9] bg-white">文档网格</button>
    <button class="h-6 w-[46px] border-t border-r border-[#d9d9d9]">分栏</button>
  </div>
  <div class="mr-[9px] ml-[7px] flex flex-1 flex-col border border-[#d9d9d9] bg-white px-[7px] pt-[5px] pb-3">
    <div class="flex h-5 items-center gap-0.5">文字排列<span class="h-px flex-1 bg-[#999]"></span></div>
    <div class="mt-1 grid h-[23px] grid-cols-[87px_127px_1fr] items-center pl-2">
      <span>方向:</span>
      <label class="flex items-center gap-1.5"><input type="radio" name="dir" class="h-[13px] w-[13px] appearance-none rounded-full border border-[#333] checked:bg-[#333] checked:shadow-[inset_0_0_0_2px_#fff]">水平(Z)</label>
      <label class="flex items-center gap-1.5"><input type="radio" name="dir" checked class="h-[13px] w-[13px] appearance-none rounded-full border border-[#333] checked:bg-[#333] checked:shadow-[inset_0_0_0_2px_#fff]">垂直(V)</label>
    </div>
    <div class="mt-[7px] flex h-5 items-center gap-0.5">网格<span class="h-px flex-1 bg-[#999]"></span></div>
    <div class="mt-[3px] grid grid-cols-[211px_1fr] pl-2">
      <label class="flex h-[23px] items-center gap-1.5"><input type="radio" name="grid" class="h-[13px] w-[13px] appearance-none rounded-full border border-[#333] checked:bg-[#333] checked:shadow-[inset_0_0_0_2px_#fff]">无网格(N)</label>
      <label class="flex h-[23px] items-center gap-1.5"><input type="radio" name="grid" checked class="h-[13px] w-[13px] appearance-none rounded-full border border-[#333] checked:bg-[#333] checked:shadow-[inset_0_0_0_2px_#fff]">指定行和字符网格(H)</label>
      <label class="flex h-[23px] items-center gap-1.5"><input type="radio" name="grid" class="h-[13px] w-[13px] appearance-none rounded-full border border-[#333] checked:bg-[#333] checked:shadow-[inset_0_0_0_2px_#fff]">只指定行网格(O)</label>
      <label class="flex h-[23px] items-center gap-1.5"><input type="radio" name="grid" class="h-[13px] w-[13px] appearance-none rounded-full border border-[#333] checked:bg-[#333] checked:shadow-[inset_0_0_0_2px_#fff]">文字对齐字符网格(X)</label>
    </div>
    <div class="mt-[7px] flex h-5 items-center gap-0.5">字符<span class="h-px flex-1 bg-[#999]"></span></div>
    <div class="mt-[5px] flex h-[23px] items-center gap-[7px] pl-2"><label for="perline">每行(E):</label>
      <span class="flex h-[23px] w-[65px] items-center border border-[#6f6f6f] p-px"><input id="perline" value="39" class="w-0 flex-1 pl-0.5"><span class="grid h-[19px] w-[14px] grid-rows-2 divide-y divide-[#999] border border-[#999] bg-[#efefef]"><button aria-label="增加" class="flex items-center justify-center"><svg class="h-[3px] w-[5px] rotate-180"><use href="#caret"/></svg></button><button aria-label="减少" class="flex items-center justify-center"><svg class="h-[3px] w-[5px]"><use href="#caret"/></svg></button></span></span>(1-43)</div>
    <div class="mt-2 flex h-5 items-center gap-0.5">行<span class="h-px flex-1 bg-[#999]"></span></div>
    <div class="mt-[5px] flex h-[23px] items-center gap-[7px] pl-2"><label for="perpage">每页(R):</label>
      <span class="flex h-[23px] w-[65px] items-center border border-[#6f6f6f] p-px"><input id="perpage" value="44" class="w-0 flex-1 pl-0.5"><span class="grid h-[19px] w-[14px] grid-rows-2 divide-y divide-[#999] border border-[#999] bg-[#efefef]"><button aria-label="增加" class="flex items-center justify-center"><svg class="h-[3px] w-[5px] rotate-180"><use href="#caret"/></svg></button><button aria-label="减少" class="flex items-center justify-center"><svg class="h-[3px] w-[5px]"><use href="#caret"/></svg></button></span></span>(1-48)</div>

    <div class="mt-auto flex h-5 items-center gap-0.5">预览<span class="h-px flex-1 bg-[#999]"></span></div>
    <div class="mt-[3px] flex items-start justify-between pl-2">
      <div>
        <label for="apply" class="block h-[21px] leading-5">应用于(Y):</label>
        <div class="relative w-[145px]">
          <select id="apply" class="block h-[22px] w-full appearance-none border border-[#00539c] bg-[#cce4f7] px-[3px]"><option>整篇文档</option><option>所选文字</option></select>
          <svg class="absolute top-2 right-[5px] h-[5px] w-2"><use href="#caret"/></svg>
          <ul class="absolute top-[22px] left-0 z-10 w-full border border-[#d9d9d9] bg-white"><li class="h-[21px] bg-[#cbcbcb] px-[3px] leading-5">整篇文档</li><li class="h-[21px] px-[3px] leading-5 text-[#333]">所选文字</li></ul>
        </div>
        <div class="mt-8 mb-px flex gap-3 pl-px">
          <button class="h-[30px] w-[85px] border border-[#adadad] bg-[#e1e1e1]">绘图网格(W)...</button>
          <button class="h-[30px] w-[79px] border border-[#adadad] bg-[#e1e1e1]">字体设置(F)...</button>
        </div>
      </div>
      <div class="mt-4 mr-0.5 flex h-[71px] w-[101px] items-center justify-center border border-black bg-white shadow-[2px_2px_0_#000]">
        <svg class="h-[52px] w-[87px]" viewBox="0 0 87 52" stroke="#000" fill="none"><path d="M1.500 1v50M5.500 4v47M13.500 1v17M17.500 1v50M21.500 1v50M25.500 4v47M33.500 1v17M37.500 1v50M41.500 1v50M45.500 4v47M53.500 1v17M57.500 1v50M61.500 1v50M65.500 4v47M73.500 1v17M77.500 1v50M81.500 1v50M85.500 4v47"/></svg>
      </div>
    </div>
  </div>
  <div class="mx-2 mt-2 mb-[9px] flex shrink-0 gap-2">
    <button class="mr-auto h-[30px] w-[77px] border border-[#adadad] bg-[#e1e1e1]">默认(D)...</button>
    <button class="h-[30px] w-[77px] border-2 border-[#0078d7] bg-[#e1e1e1]">确定</button>
    <button class="h-[30px] w-[77px] border border-[#adadad] bg-[#e1e1e1]">取消</button>
  </div>
  <svg class="pointer-events-none absolute inset-0 z-20 h-full w-full drop-shadow-[2px_3px_2px_rgba(0,0,0,0.5)]" viewBox="0 0 456 600" fill="#f80c0c" stroke="#b80000" stroke-width=".6"><path d="M86 486l27-5-3 4.500 104 3q2 1.500 0 3l-104-2 2 4.500z"/><path d="M326 556l-14-21 5 0L305 503q1-2 3-1l13 31 4-3z"/></svg>
</form>

<!-- Windows activation notice -->
<div class="pointer-events-none absolute right-[93px] bottom-[49px] z-20 w-[196px] whitespace-nowrap text-[#999]/80">
  <p class="text-xl leading-6">激活 Windows</p>
  <p class="mt-0.5 text-[15px] leading-5">转到"设置"以激活 Windows。</p>
</div>

<!-- Input method bar and download-site logo -->
<div class="absolute right-0.5 bottom-0 z-20 flex h-[26px] w-[150px] items-center justify-between border border-[#b8cbea] bg-white pr-1 pl-[35px] text-[#0a6fd6]">
  <span class="text-[15px] font-bold">中</span>
  <svg class="h-3 w-3" viewBox="0 0 12 12" fill="currentColor"><circle cx="3" cy="4" r="2"/><path d="M8 6h3q1 4-3 6z"/></svg>
  <svg class="h-4 w-3" viewBox="0 0 12 16" fill="currentColor"><rect x="3" width="6" height="10" rx="3"/><path d="M0 6h2q0 5 4 5t4-5h2q0 6-5 7v3H5v-3Q0 12 0 6z"/></svg>
  <svg class="h-3 w-4" viewBox="0 0 16 12"><rect width="16" height="12" rx="1.500" fill="#0a6fd6"/><path d="M2 3.500h12M2 6.500h12M4 9.500h8" stroke="#fff" stroke-width="1.500" stroke-dasharray="2 1"/></svg>
  <svg class="h-3.5 w-3.5" viewBox="0 0 14 14"><rect width="6" height="6" rx="2" fill="#9c6bd8"/><rect x="8" width="6" height="6" rx="3" fill="#5a74ee"/><rect y="8" width="6" height="6" rx="2" fill="#d2688c"/><rect x="8" y="8" width="6" height="6" rx="2" fill="#5a74ee"/></svg>
</div>
<div class="pointer-events-none absolute right-[11px] bottom-0 z-20 flex h-[50px] w-[148px] items-start whitespace-nowrap">
  <svg class="h-[50px] w-[43px] shrink-0" viewBox="0 0 43 50"><path d="M41 1Q14 4 9 22q-2 6 1 10Q-2 28 2 18 10 1 41 1z" fill="#4f97d5"/><path d="M34 4Q14 9 12 24l5-2Q18 11 34 4z" fill="#7cc0ea"/><path d="M25 16q16-5 17 4 0 12-22 20 14-10 13-18-1-5-8-6z" fill="#5cb98a"/><path d="M8 23l24-5q3 0 4 3l3 20q0 3-3 4l-22 4q-3 0-4-3z" fill="#f3521b"/><path d="M31 24l-15 3q-3 4 0 6l14 2q3 4-1 7l-13 2" fill="none" stroke="#fff" stroke-width="4"/><path d="M5 38l22-13 3 2Q20 36 5 38z" fill="#e5b43e" opacity=".8"/></svg>
  <div><p class="text-[21px] leading-6 font-bold text-[#4a8acb]/90">极光下载站</p><p class="text-base leading-5 font-semibold text-[#45b865]/70">www.xz7.com</p></div>
</div>
<div class="absolute right-[3px] bottom-[29px] z-30 flex h-[58px] w-[7px] items-end overflow-hidden rounded-full bg-[#8b8b8b]"><span class="h-[29px] w-full bg-linear-to-b from-[#22c062] to-[#6ff07c]"></span></div>

<script>
  // Horizontal ruler: one unit is 15.24px, zero lies 121px in from the page edge.
  const h = ['<rect x="130" width="604" height="16" fill="#b7b7b7"/>'];
  for (let k = -6; k <= 48; k++) {
    const x = Math.round(121 + k * 15.24);
    if (k !== 0 && k % 2 === 0 && k < 47) h.push(`<text x="${x}" y="11" text-anchor="middle" font-size="10" fill="#555">${Math.abs(k)}</text>`);
    h.push(`<path d="M${Math.round(121 + (k - 0.5) * 15.24)}.5 6v10" stroke="#888"/>`);
  }
  [115, 239, 362, 486, 610, 734].forEach(x => {
    h.push(`<rect x="${x}" width="16" height="16" fill="#f2f2f2"/>`);
    for (let i = 0; i < 4; i++) h.push(`<path d="M${x + 4} ${5.5 + i * 2}h8" stroke="#777" stroke-dasharray="1 1"/>`);
  });
  document.getElementById('hruler').innerHTML = h.join('');

  // Vertical ruler: one unit is 22.7px, zero lies 124px below its top.
  const v = ['<rect y="125" width="16" height="2000" fill="#b7b7b7"/><path d="M0 125.5h16" stroke="#444"/>'];
  for (let k = -4; k <= 32; k++) if (k) {
    const y = Math.round(125 + k * 22.7);
    v.push(`<text transform="translate(11 ${y}) rotate(-90)" text-anchor="middle" font-size="10" fill="#333">${Math.abs(k)}</text>`);
  }
  [141, 164, 188, 219].forEach(y => v.push(`<rect y="${y}" width="16" height="7" fill="#f2f2f2" fill-opacity=".9"/>`));
  document.getElementById('vruler').innerHTML = v.join('');
</script>
</body>
</html>
